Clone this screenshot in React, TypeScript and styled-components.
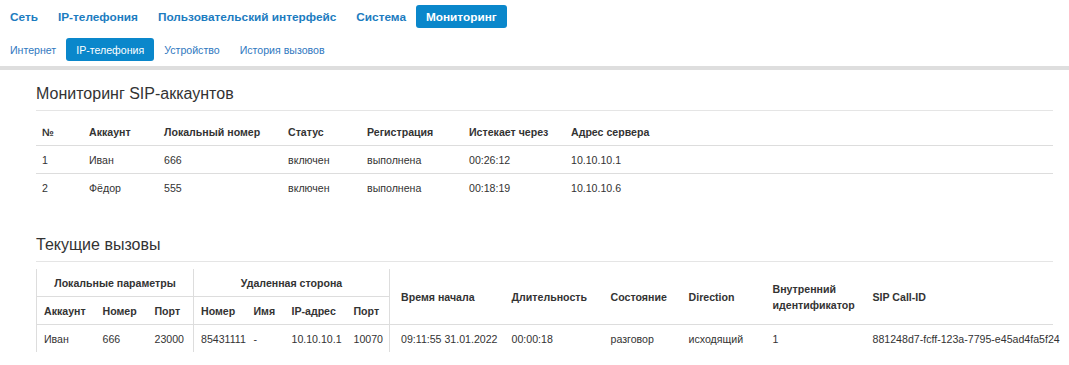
import styled, { createGlobalStyle } from 'styled-components';

const GlobalStyle = createGlobalStyle`
  html, body {
    margin: 0;
    padding: 0;
    background: #fff;
  }
  body {
    font-family: "Liberation Sans", Arial, sans-serif;
    color: #333;
  }
`;

const Header = styled.div`
  padding: 5px 0 5px;
  border-bottom: 4px solid #dedede;
`;

const NavRow = styled.nav<{ $sub?: boolean }>`
  display: flex;
  align-items: center;
  margin-top: ${({ $sub }) => ($sub ? '10px' : '0')};
`;

const NavItem = styled.a<{ $active?: boolean; $sub?: boolean }>`
  display: inline-flex;
  align-items: center;
  height: 23px;
  padding: 0 10px;
  border-radius: 3px;
  font-size: ${({ $sub }) => ($sub ? '10.6px' : '11.8px')};
  font-weight: ${({ $sub }) => ($sub ? 'normal' : 'bold')};
  color: ${({ $active, $sub }) => ($active ? '#fff' : $sub ? '#2f78c0' : '#1c7cc0')};
  background: ${({ $active }) => ($active ? '#0a87cb' : 'transparent')};
  text-decoration: none;
  cursor: pointer;
  white-space: nowrap;
`;

const Content = styled.main`
  padding: 0 16px 0 36px;
`;

const SectionTitle = styled.h3<{ $gap: number }>`
  margin: 0;
  padding: ${({ $gap }) => $gap}px 0 6px;
  font-size: 16px;
  line-height: 20px;
  font-weight: normal;
  color: #333;
  border-bottom: 1px solid #e5e5e5;
`;

const Table = styled.table`
  width: 100%;
  margin-top: 7px;
  border-collapse: collapse;
  table-layout: fixed;
  font-size: 10.6px;
  color: #333;
`;

const Th = styled.th<{ $pl?: number; $center?: boolean; $left?: boolean; $right?: boolean }>`
  height: 27px;
  padding: 0 6px 0 ${({ $pl }) => $pl ?? 6}px;
  text-align: ${({ $center }) => ($center ? 'center' : 'left')};
  vertical-align: middle;
  font-weight: bold;
  line-height: 16px;
  border-bottom: 1px solid #ddd;
  border-left: ${({ $left }) => ($left ? '1px solid #ddd' : 'none')};
  border-right: ${({ $right }) => ($right ? '1px solid #ddd' : 'none')};
`;

const Td = styled.td<{ $pl?: number; $left?: boolean; $right?: boolean; $line?: boolean }>`
  height: 27px;
  padding: 0 6px 0 ${({ $pl }) => $pl ?? 6}px;
  vertical-align: middle;
  white-space: nowrap;
  border-bottom: ${({ $line }) => ($line ? '1px solid #ddd' : 'none')};
  border-left: ${({ $left }) => ($left ? '1px solid #ddd' : 'none')};
  border-right: ${({ $right }) => ($right ? '1px solid #ddd' : 'none')};
`;

const Spacer = styled.div<{ $h: number }>`
  height: ${({ $h }) => $h}px;
`;

const accounts = [
  { n: '1', name: 'Иван', num: '666', status: 'включен', reg: 'выполнена', exp: '00:26:12', addr: '10.10.10.1' },
  { n: '2', name: 'Фёдор', num: '555', status: 'включен', reg: 'выполнена', exp: '00:18:19', addr: '10.10.10.6' },
];

const accountCols = [47, 75, 124, 79, 102, 102];
const callCols = [60, 52, 45, 54, 38, 62, 42, 116, 99, 78, 84, 100];

export default function App() {
  return (
    <>
      <GlobalStyle />
      <Header>
        <NavRow>
          <NavItem>Сеть</NavItem>
          <NavItem>IP-телефония</NavItem>
          <NavItem>Пользовательский интерфейс</NavItem>
          <NavItem>Система</NavItem>
          <NavItem $active>Мониторинг</NavItem>
        </NavRow>
        <NavRow $sub>
          <NavItem $sub>Интернет</NavItem>
          <NavItem $sub $active>IP-телефония</NavItem>
          <NavItem $sub>Устройство</NavItem>
          <NavItem $sub>История вызовов</NavItem>
        </NavRow>
      </Header>

      <Content>
        <SectionTitle $gap={14}>Мониторинг SIP-аккаунтов</SectionTitle>
        <Table>
          <colgroup>
            {accountCols.map((w, i) => (
              <col key={i} style={{ width: w }} />
            ))}
            <col />
          </colgroup>
          <thead>
            <tr>
              <Th>№</Th>
              <Th>Аккаунт</Th>
              <Th>Локальный номер</Th>
              <Th>Статус</Th>
              <Th>Регистрация</Th>
              <Th>Истекает через</Th>
              <Th>Адрес сервера</Th>
            </tr>
          </thead>
          <tbody>
            {accounts.map((a, i) => {
              const line = i < accounts.length - 1;
              return (
                <tr key={a.n}>
                  <Td $line={line}>{a.n}</Td>
                  <Td $line={line}>{a.name}</Td>
                  <Td $line={line}>{a.num}</Td>
                  <Td $line={line}>{a.status}</Td>
                  <Td $line={line}>{a.reg}</Td>
                  <Td $line={line}>{a.exp}</Td>
                  <Td $line={line}>{a.addr}</Td>
                </tr>
              );
            })}
          </tbody>
        </Table>

        <Spacer $h={20} />
        <SectionTitle $gap={14}>Текущие вызовы</SectionTitle>
        <Table>
          <colgroup>
            {callCols.map((w, i) => (
              <col key={i} style={{ width: w }} />
            ))}
            <col />
          </colgroup>
          <thead>
            <tr>
              <Th colSpan={3} $center $left $right>Локальные параметры</Th>
              <Th colSpan={4} $center $right>Удаленная сторона</Th>
              <Th rowSpan={2} $pl={11}>Время начала</Th>
              <Th rowSpan={2}>Длительность</Th>
              <Th rowSpan={2}>Состояние</Th>
              <Th rowSpan={2}>Direction</Th>
              <Th rowSpan={2}>Внутренний идентификатор</Th>
              <Th rowSpan={2}>SIP Call-ID</Th>
            </tr>
            <tr>
              <Th $left $pl={7}>Аккаунт</Th>
              <Th>Номер</Th>
              <Th $right>Порт</Th>
              <Th $pl={7}>Номер</Th>
              <Th>Имя</Th>
              <Th>IP-адрес</Th>
              <Th $right>Порт</Th>
            </tr>
          </thead>
          <tbody>
            <tr>
              <Td $left $pl={7}>Иван</Td>
              <Td>666</Td>
              <Td $right>23000</Td>
              <Td $pl={7}>85431111</Td>
              <Td>-</Td>
              <Td>10.10.10.1</Td>
              <Td $right>10070</Td>
              <Td $pl={11}>09:11:55 31.01.2022</Td>
              <Td>00:00:18</Td>
              <Td>разговор</Td>
              <Td>исходящий</Td>
              <Td>1</Td>
              <Td>881248d7-fcff-123a-7795-e45ad4fa5f24</Td>
            </tr>
          </tbody>
        </Table>
      </Content>
    </>
  );
}
